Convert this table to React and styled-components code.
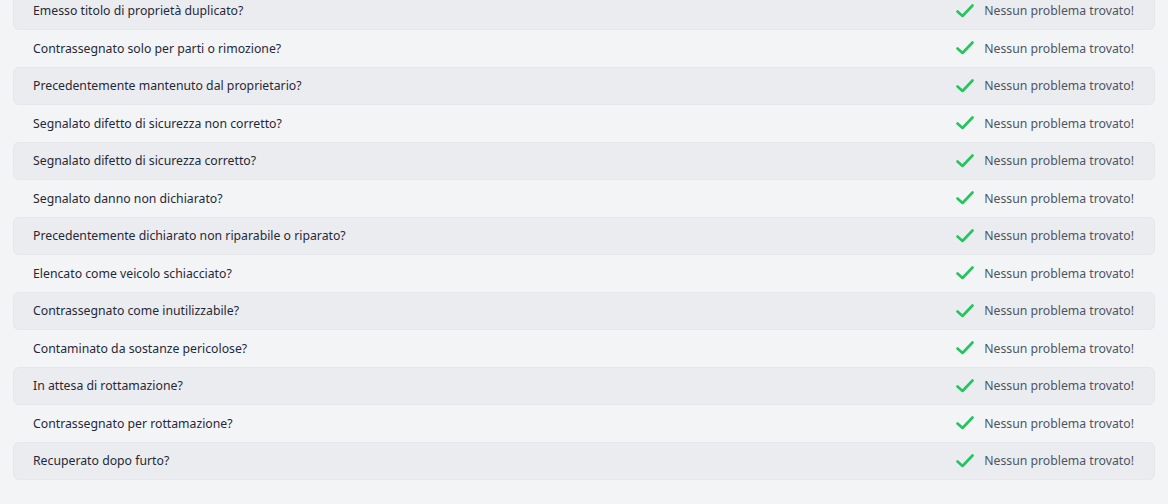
import React from 'react';
import styled, { createGlobalStyle } from 'styled-components';

const GlobalStyle = createGlobalStyle`
  html, body {
    margin: 0;
    padding: 0;
    background: #f3f4f6;
    overflow: hidden;
  }
  body {
    font-family: "Segoe UI", "Noto Sans", "Open Sans", sans-serif;
  }
`;

const Page = styled.div`
  width: 1168px;
  height: 504px;
  overflow: hidden;
  background: #f3f4f6;
`;

const List = styled.ul`
  list-style: none;
  margin: -8px 0 0;
  padding: 0 13px 0 13px;
`;

const Row = styled.li`
  display: flex;
  align-items: center;
  justify-content: space-between;
  box-sizing: border-box;
  height: 37.5px;
  padding: 0 20px 0 19px;
  border-radius: 6px;
  border: 1px solid ${(p) => (p.$shaded ? '#e6e7eb' : 'transparent')};
  background: ${(p) => (p.$shaded ? '#ebecf0' : 'transparent')};
`;

const Question = styled.span`
  font-size: 12.25px;
  color: #1f2937;
`;

const Result = styled.span`
  display: flex;
  align-items: center;
  gap: 10px;
  font-size: 12.25px;
  color: #4b5563;
`;

const CheckIcon = () => (
  <svg width="18" height="14" viewBox="0 0 18 14" fill="none">
    <path
      d="M1.5 7.5 L6.5 12 L16.5 1.5"
      stroke="#22c55e"
      strokeWidth="2.6"
      strokeLinecap="round"
      strokeLinejoin="round"
    />
  </svg>
);

const questions = [
  'Emesso titolo di proprietà duplicato?',
  'Contrassegnato solo per parti o rimozione?',
  'Precedentemente mantenuto dal proprietario?',
  'Segnalato difetto di sicurezza non corretto?',
  'Segnalato difetto di sicurezza corretto?',
  'Segnalato danno non dichiarato?',
  'Precedentemente dichiarato non riparabile o riparato?',
  'Elencato come veicolo schiacciato?',
  'Contrassegnato come inutilizzabile?',
  'Contaminato da sostanze pericolose?',
  'In attesa di rottamazione?',
  'Contrassegnato per rottamazione?',
  'Recuperato dopo furto?',
];

export default function App() {
  return (
    <Page>
      <GlobalStyle />
      <List>
        {questions.map((q, i) => (
          <Row key={q} $shaded={i % 2 === 0}>
            <Question>{q}</Question>
            <Result>
              <CheckIcon />
              Nessun problema trovato!
            </Result>
          </Row>
        ))}
      </List>
    </Page>
  );
}
